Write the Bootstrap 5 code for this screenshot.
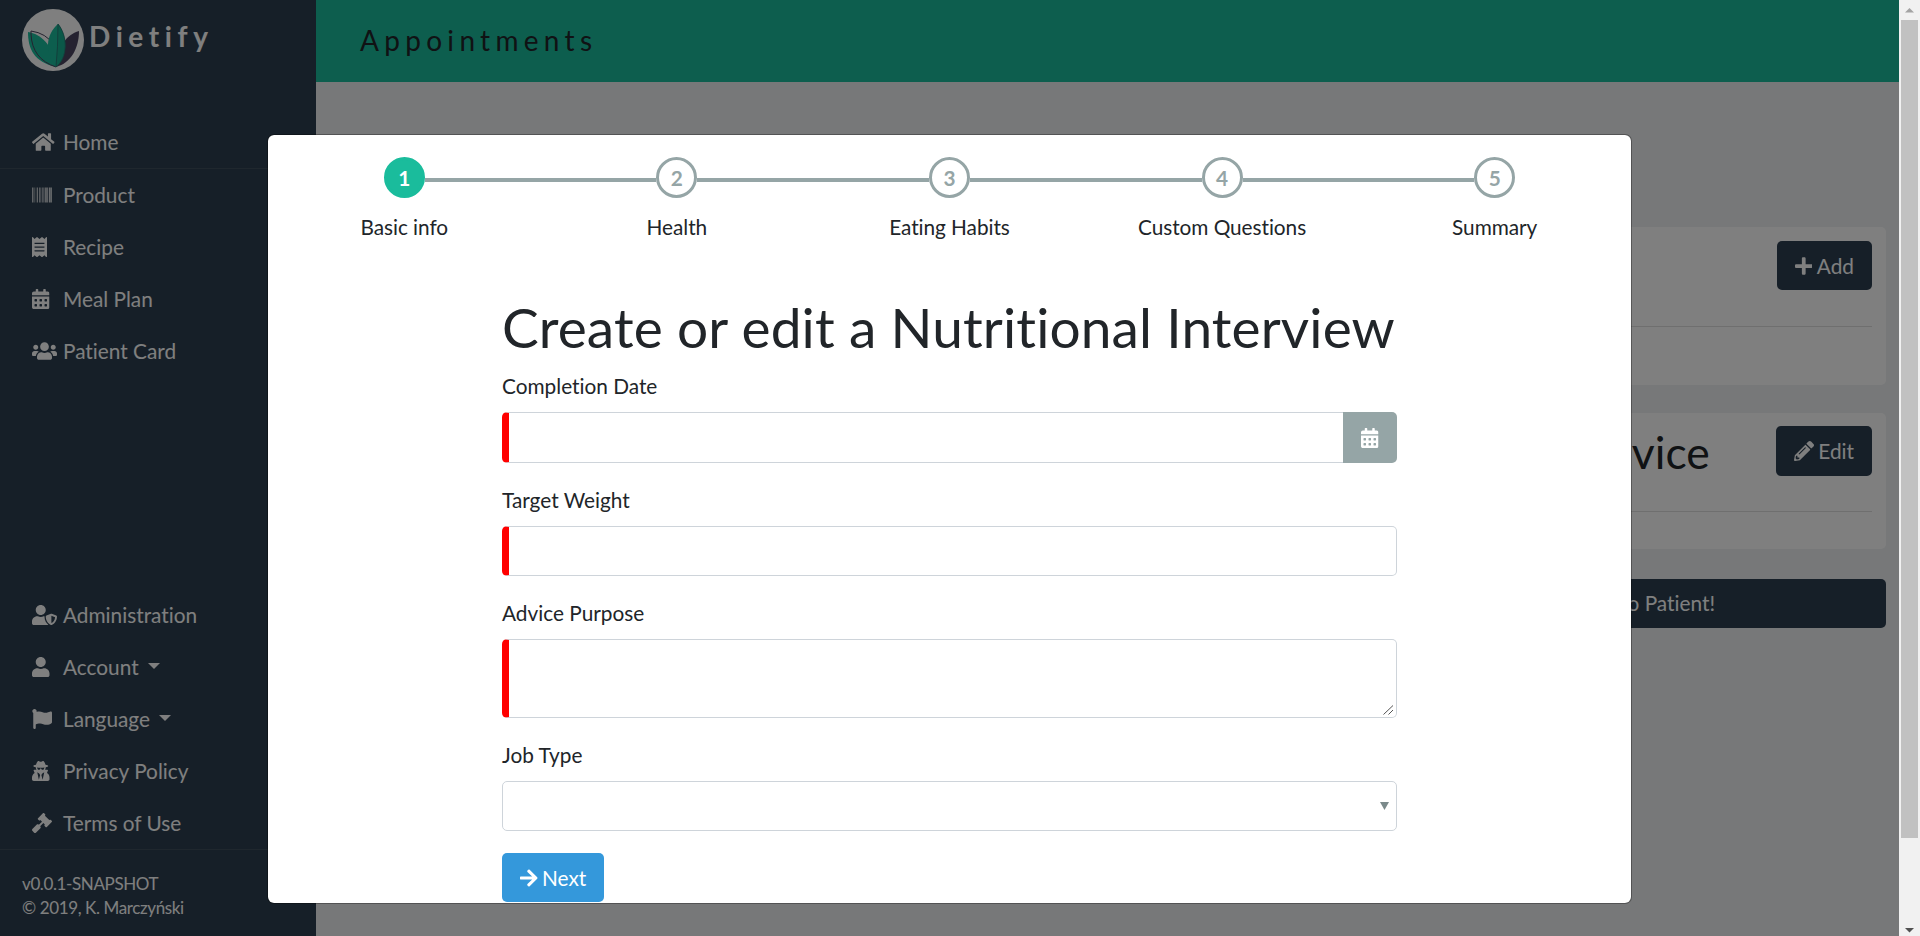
<!DOCTYPE html>
<html lang="en">
<head>
<meta charset="utf-8">
<title>Dietify</title>
<link href="https://cdn.jsdelivr.net/npm/bootstrap@5.3.0/dist/css/bootstrap.min.css" rel="stylesheet">
<style>
html,body{height:100%}
body{font-family:Lato,"Liberation Sans",sans-serif;font-size:20.8px;line-height:1.5;color:#212529;overflow:hidden;background:#eef0f2;font-variant-ligatures:none}
svg.ico{height:20px;width:auto;fill:currentColor;display:block;flex:none}
.page{margin-right:21px}
.sidebar{width:316px;background:#2c3e50;color:#fff;flex:none}
.brand{padding:9px 0 0 22px;height:116px}
.brand-name{font-size:28px;font-weight:700;letter-spacing:5.6px;line-height:54px;margin-left:5px}
.side-link{height:52px;padding:0 0 0 32px;color:#fff;text-decoration:none}
.side-link .slot{width:31px;flex:none}
.side-link .dropdown-toggle::after{margin-left:9px;border-top-width:6px;border-left-width:6px;border-right-width:6px;vertical-align:6px}
.rule{border-color:#3e4e5d!important}
.foot{font-size:17px;line-height:24px;padding:22px 0 0 22px;height:86px;letter-spacing:-.38px}
.topbar{height:82px;background:#1abc9c;padding:0 0 2px 44px;font-size:28px;letter-spacing:5.3px}
.work{padding:145px 13px 0 13px}
.panel{background:#fff;border-radius:5px;padding:14px 14px 0 0;margin-bottom:28px}
.panel-add{height:158px}
.panel-edit{height:136px}
.panel-head{height:85px}
.panel-edit .panel-head{height:84px}
.panel-edit .btn{height:50px;margin-top:-1px}
.panel hr{margin:0;opacity:.15}
.btn{font-size:20.8px;line-height:30px;padding:9px 17px;border:1px solid transparent;border-radius:5px;height:49px}
.btn-navy,.btn-navy:hover{background:#2c3e50;color:#fff}
.btn-next,.btn-next:hover{background:#3498db;color:#fff}
.panel-title{font-size:44.5px;line-height:50px;margin-right:66px}
.btn-send{padding:8px 170px 10px 17px;margin-top:30px}
.gap-ico{gap:4.5px}
.shade{position:absolute;inset:0 21px 0 0;background:rgba(0,0,0,.5)}
.wizard{position:absolute;left:267px;top:134px;width:1365px;height:770px;background:#fff;border:1px solid rgba(0,0,0,.3);border-radius:7px;background-clip:padding-box;overflow:hidden}
.steps{padding-top:22px}
.step-item{width:20%}
.step-item span{margin-top:13px;line-height:31px;letter-spacing:-.05px}
.bar{height:4px;background:#95a5a6;flex:1;margin-top:4px}
.bar.off{background:none}
.dot{width:41px;height:41px;border:3px solid #95a5a6;border-radius:50%;color:#95a5a6;font-weight:700;flex:none}
.dot.on{background:#1abc9c;border-color:#1abc9c;color:#fff}
.fields{width:895px;margin:53px auto 0}
.fields h2{font-size:55px;line-height:64px;margin:0 0 12px;font-weight:400;white-space:nowrap;letter-spacing:.12px}
.form-label{margin:0 0 12px;line-height:29px;display:block}
.form-control{height:50px;border:1px solid #ced4da;border-radius:5px;font-size:20.8px}
.field{margin-bottom:22px}
.date-field{height:51px}
textarea.form-control{height:79px;min-height:0;resize:none;display:block}
.grip{position:absolute;right:3px;bottom:3px}
.select-box{padding-right:7px}
.req{border-left:7px solid #f00}
.cal{width:54px;background:#95a5a6;color:#fff;border-radius:0 5px 5px 0}
.scroller{width:21px;background:#f1f1f1;position:absolute;right:0;top:0;bottom:0}
.thumb{width:17px;background:#c1c1c1;height:818px}
</style>
</head>
<body>
<svg width="0" height="0" class="position-absolute"><defs>
<symbol id="cal" viewBox="0 0 448 512"><path fill-rule="evenodd" d="M0 464c0 26.5 21.5 48 48 48h352c26.5 0 48-21.5 48-48V192H0zM64 268q0-12 12-12h40q12 0 12 12v40q0 12-12 12H76q-12 0-12-12zm128 0q0-12 12-12h40q12 0 12 12v40q0 12-12 12h-40q-12 0-12-12zm128 0q0-12 12-12h40q12 0 12 12v40q0 12-12 12h-40q-12 0-12-12zM64 396q0-12 12-12h40q12 0 12 12v40q0 12-12 12H76q-12 0-12-12zm128 0q0-12 12-12h40q12 0 12 12v40q0 12-12 12h-40q-12 0-12-12zm128 0q0-12 12-12h40q12 0 12 12v40q0 12-12 12h-40q-12 0-12-12zM400 64h-48V16c0-8.800-7.200-16-16-16h-32c-8.800 0-16 7.200-16 16v48H160V16c0-8.800-7.200-16-16-16h-32c-8.800 0-16 7.200-16 16v48H48C21.500 64 0 85.500 0 112v48h448v-48c0-26.500-21.500-48-48-48z"/></symbol>
</defs></svg>
<div class="position-relative h-100 overflow-hidden">
<div class="page d-flex h-100">
<nav class="sidebar d-flex flex-column">
  <div class="brand d-flex align-items-start">
    <svg width="62" height="62" viewBox="0 0 62 62"><circle cx="31" cy="31" r="31" fill="#fff"/><path d="M34 58C37 36 44 26 57 22C57 39 49 54 34 58z" fill="#4b4561"/><path d="M34 58C12 53 6 40 6 23C19 25 31 36 34 58z" fill="#1abc9c"/><path d="M9 25v-3q15 2 23 14M9 25q1 25 25 33" fill="none" stroke="#4b4561" stroke-width="1"/><path d="M34 58C22 44 24 25 36 15C46 27 46 49 34 58z" fill="#1abc9c"/><path d="M36 15C46 27 46 49 34 58Q36 38 36 15z" fill="#16b091" stroke="#2a6f6f" stroke-width=".8"/></svg>
    <span class="brand-name">Dietify</span>
  </div>
  <a class="side-link d-flex align-items-center" href="#"><span class="slot"><svg class="ico" viewBox="0 0 576 512"><path d="M280.37 148.26L96 300.11V464a16 16 0 0 0 16 16l112.060-.29a16 16 0 0 0 15.920-16V368a16 16 0 0 1 16-16h64a16 16 0 0 1 16 16v95.640a16 16 0 0 0 16 16.050L464 480a16 16 0 0 0 16-16V300L295.670 148.260a12.190 12.190 0 0 0-15.300 0zM571.600 251.470L488 182.560V44.050a12 12 0 0 0-12-12h-56a12 12 0 0 0-12 12v72.610L318.470 43a48 48 0 0 0-61 0L4.340 251.470a12 12 0 0 0-1.600 16.900l25.500 31A12 12 0 0 0 45.150 301l235.220-193.740a12.190 12.190 0 0 1 15.300 0L530.900 301a12 12 0 0 0 16.900-1.600l25.500-31a12 12 0 0 0-1.700-16.930z"/></svg></span>Home</a>
  <div class="border-top rule"></div>
  <a class="side-link d-flex align-items-center" href="#"><span class="slot"><svg class="ico" viewBox="0 0 512 512"><path d="M0 64h18v384H0zM26.900 64H36v384h-9.100zM54 64h9v384h-9zM98.900 64h8.900v384h-8.900zM134.900 64h17.700v384h-17.700zM179.700 64h8.900v384h-8.900zM197.700 64h8.900v384h-8.900zM215.700 64h8.900v384h-8.900zM251.400 64h18v384h-18zM296.300 64h18v384h-18zM332.300 64h18v384h-18zM368.300 64h18v384h-18zM395.100 64h18v384h-18zM440.300 64h26.900v384h-26.900zM476 64h9v384h-9zM494 64h18v384h-18z"/></svg></span>Product</a>
  <a class="side-link d-flex align-items-center" href="#"><span class="slot"><svg class="ico" viewBox="0 0 384 512"><path d="M358.400 3.200L320 48 265.600 3.200a15.900 15.900 0 0 0-19.200 0L192 48 137.600 3.200a15.900 15.900 0 0 0-19.200 0L64 48 25.600 3.200C15-4.700 0 2.800 0 16v480c0 13.200 15 20.700 25.600 12.800L64 464l54.400 44.800a15.900 15.900 0 0 0 19.200 0L192 464l54.400 44.800a15.900 15.900 0 0 0 19.200 0L320 464l38.400 44.800c10.500 7.900 25.600.4 25.600-12.800V16c0-13.200-15-20.700-25.600-12.800zM320 360c0 4.400-3.600 8-8 8H72c-4.400 0-8-3.600-8-8v-16c0-4.400 3.600-8 8-8h240c4.400 0 8 3.600 8 8v16zm0-96c0 4.400-3.600 8-8 8H72c-4.400 0-8-3.600-8-8v-16c0-4.400 3.600-8 8-8h240c4.400 0 8 3.600 8 8v16zm0-96c0 4.400-3.600 8-8 8H72c-4.400 0-8-3.600-8-8v-16c0-4.400 3.600-8 8-8h240c4.400 0 8 3.600 8 8v16z"/></svg></span>Recipe</a>
  <a class="side-link d-flex align-items-center" href="#"><span class="slot"><svg class="ico" viewBox="0 0 448 512"><use href="#cal"/></svg></span>Meal Plan</a>
  <a class="side-link d-flex align-items-center" href="#"><span class="slot"><svg class="ico" viewBox="0 0 640 512"><path d="M96 224c35.300 0 64-28.700 64-64s-28.700-64-64-64-64 28.700-64 64 28.700 64 64 64zm448 0c35.300 0 64-28.700 64-64s-28.700-64-64-64-64 28.700-64 64 28.700 64 64 64zm32 32h-64c-17.600 0-33.500 7.100-45.100 18.600 40.300 22.100 68.900 62 75.100 109.400h66c17.700 0 32-14.300 32-32v-32c0-35.300-28.700-64-64-64zm-256 0c61.900 0 112-50.100 112-112S381.900 32 320 32 208 82.100 208 144s50.100 112 112 112zm76.800 32h-8.300c-20.800 10-43.900 16-68.500 16s-47.600-6-68.500-16h-8.300C179.600 288 128 339.600 128 403.200V432c0 26.500 21.500 48 48 48h288c26.500 0 48-21.500 48-48v-28.800c0-63.600-51.600-115.200-115.200-115.200zm-223.700-13.400C161.500 263.100 145.600 256 128 256H64c-35.300 0-64 28.700-64 64v32c0 17.700 14.300 32 32 32h65.900c6.300-47.400 34.900-87.300 75.200-109.400z"/></svg></span>Patient Card</a>
  <a class="side-link d-flex align-items-center mt-auto" href="#"><span class="slot"><svg class="ico" viewBox="0 0 640 512"><path d="M622.300 271.100l-115.200-45c-4.100-1.600-12.600-3.700-22.200 0l-115.200 45c-10.700 4.200-17.700 14-17.700 24.900 0 111.600 68.700 188.800 132.900 213.900 9.600 3.700 18 1.600 22.200 0C558.400 489.900 640 420.500 640 296c0-10.900-7-20.700-17.700-24.900zM496 462.400V273.300l95.500 37.300c-5.600 87.100-60.900 135.400-95.500 151.800zM224 256c70.700 0 128-57.300 128-128S294.700 0 224 0 96 57.300 96 128s57.300 128 128 128zm96 40c0-2.500.8-4.800 1.100-7.200-2.500-.1-4.900-.8-7.500-.8h-16.700c-22.200 10.200-46.900 16-72.900 16s-50.600-5.800-72.900-16h-16.700C60.200 288 0 348.200 0 422.400V464c0 26.500 21.500 48 48 48h352c6.800 0 13.300-1.500 19.200-4-54-42.900-99.200-116.700-99.200-212z"/></svg></span>Administration</a>
  <a class="side-link d-flex align-items-center" href="#"><span class="slot"><svg class="ico" viewBox="0 0 448 512"><path d="M224 256c70.700 0 128-57.300 128-128S294.700 0 224 0 96 57.300 96 128s57.300 128 128 128zm89.600 32h-16.700c-22.200 10.200-46.900 16-72.900 16s-50.600-5.800-72.900-16h-16.700C60.200 288 0 348.200 0 422.400V464c0 26.500 21.500 48 48 48h352c26.500 0 48-21.500 48-48v-41.600c0-74.200-60.200-134.400-134.400-134.400z"/></svg></span><span class="dropdown-toggle">Account</span></a>
  <a class="side-link d-flex align-items-center" href="#"><span class="slot"><svg class="ico" viewBox="0 0 512 512"><path d="M349.565 98.783C295.978 98.783 251.721 64 184.348 64c-24.955 0-47.309 4.384-68.045 12.013a55.947 55.947 0 0 0 3.586-23.562C118.117 24.015 94.806 1.206 66.338.048 34.345-1.254 8 24.296 8 56c0 19.026 9.497 35.825 24 45.945V488c0 13.255 10.745 24 24 24h16c13.255 0 24-10.745 24-24v-94.400c28.311-12.064 63.582-22.122 114.435-22.122 53.588 0 97.844 34.783 165.217 34.783 48.169 0 86.667-16.294 122.505-40.858C506.840 359.452 512 349.571 512 339.045v-243.100c0-23.393-24.269-38.870-45.485-29.016-34.338 15.948-76.454 31.854-116.950 31.854z"/></svg></span><span class="dropdown-toggle">Language</span></a>
  <a class="side-link d-flex align-items-center" href="#"><span class="slot"><svg class="ico" viewBox="0 0 448 512"><path d="M383.900 308.300l23.900-62.600c4-10.500-3.700-21.700-15-21.700h-58.500c11-18.900 17.800-40.600 17.800-64v-.3c39.200-7.800 64-19.100 64-31.700 0-13.300-27.300-25.100-70.100-33-9.200-32.800-27-65.800-40.600-82.800-9.500-11.900-25.900-15.600-39.500-8.800l-27.600 13.800c-9 4.500-19.600 4.500-28.600 0L182.100 3.400c-13.600-6.800-30-3.100-39.500 8.800-13.500 17-31.400 50-40.600 82.800-42.700 7.900-70 19.700-70 33 0 12.600 24.800 23.900 64 31.700v.3c0 23.400 6.800 45.100 17.800 64H56.300c-11.500 0-19.200 11.700-14.700 22.300l25.800 60.200C27.300 329.800 0 372.700 0 422.400v44.800C0 491.900 20.100 512 44.800 512h358.400c24.700 0 44.800-20.100 44.800-44.800v-44.800c0-48.400-25.800-90.400-64.100-114.100zM176 480l-41.600-192 49.600 32 24 40-32 120zm96 0l-32-120 24-40 49.600-32L272 480zm41.700-298.500c-3.900 11.900-7 24.600-16.500 33.400-10.100 9.300-48 22.400-64-25-2.800-8.400-15.400-8.400-18.300 0-17 50.200-56 32.400-64 25-9.500-8.800-12.700-21.500-16.500-33.400-.8-2.500-6.300-5.700-6.300-5.800v-10.800c28.300 3.600 61 5.800 96 5.800s67.700-2.100 96-5.800v10.800c-.1.1-5.600 3.200-6.400 5.800z"/></svg></span>Privacy Policy</a>
  <a class="side-link d-flex align-items-center" href="#"><span class="slot"><svg class="ico" viewBox="0 0 512 512"><path d="M504.971 199.362l-22.627-22.627c-9.373-9.373-24.569-9.373-33.941 0l-5.657 5.657L329.608 69.255l5.657-5.657c9.373-9.373 9.373-24.569 0-33.941L312.638 7.029c-9.373-9.373-24.569-9.373-33.941 0L154.246 131.480c-9.373 9.373-9.373 24.569 0 33.941l22.627 22.627c9.373 9.373 24.569 9.373 33.941 0l5.657-5.657 39.598 39.598-81.040 81.040-5.657-5.657c-12.497-12.497-32.758-12.497-45.255 0L9.373 412.118c-12.497 12.497-12.497 32.758 0 45.255l45.255 45.255c12.497 12.497 32.758 12.497 45.255 0l114.745-114.745c12.497-12.497 12.497-32.758 0-45.255l-5.657-5.657 81.040-81.040 39.598 39.598-5.657 5.657c-9.373 9.373-9.373 24.569 0 33.941l22.627 22.627c9.373 9.373 24.569 9.373 33.941 0l124.451-124.451c9.372-9.372 9.372-24.568 0-33.941z"/></svg></span>Terms of Use</a>
  <div class="border-top rule"></div>
  <div class="foot">v0.0.1-SNAPSHOT<br>© 2019, K. Marczyński</div>
</nav>
<main class="flex-grow-1">
  <header class="topbar d-flex align-items-center">Appointments</header>
  <div class="work">
    <section class="panel panel-add"><div class="panel-head d-flex justify-content-end"><a class="btn btn-navy d-flex align-items-center gap-ico"><svg class="ico" viewBox="0 0 448 512"><path d="M416 208H272V64c0-17.670-14.330-32-32-32h-32c-17.670 0-32 14.330-32 32v144H32c-17.670 0-32 14.330-32 32v32c0 17.670 14.330 32 32 32h144v144c0 17.670 14.330 32 32 32h32c17.670 0 32-14.330 32-32V304h144c17.670 0 32-14.330 32-32v-32c0-17.670-14.330-32-32-32z"/></svg>Add</a></div><hr></section>
    <section class="panel panel-edit"><div class="panel-head d-flex justify-content-end"><span class="panel-title">Advice</span><a class="btn btn-navy d-flex align-items-center gap-ico"><svg class="ico" viewBox="0 0 512 512"><path d="M497.900 142.100l-46.100 46.100c-4.700 4.700-12.300 4.700-17 0l-111-111c-4.700-4.700-4.700-12.300 0-17l46.100-46.100c18.700-18.700 49.100-18.700 67.900 0l60.100 60.100c18.800 18.700 18.800 49.100 0 67.900zM284.200 99.800L21.600 362.400.4 483.900c-2.900 16.400 11.400 30.600 27.800 27.800l121.500-21.300 262.600-262.600c4.700-4.700 4.700-12.300 0-17l-111-111c-4.800-4.700-12.400-4.700-17.100 0zM124.100 339.900c-5.500-5.500-5.500-14.300 0-19.800l154-154c5.500-5.500 14.300-5.500 19.800 0s5.500 14.300 0 19.800l-154 154c-5.500 5.500-14.300 5.500-19.800 0zM88 424h48v36.300l-64.500 11.300-31.100-31.100L51.700 376H88v48z"/></svg>Edit</a></div><hr></section>
    <a class="btn btn-navy btn-send d-block text-end">Send to Patient!</a>
  </div>
</main>
</div>
<div class="shade"></div>
<div class="wizard">
  <div class="steps d-flex">
    <div class="step-item d-flex flex-column align-items-center"><div class="d-flex w-100 align-items-center"><i class="bar off"></i><b class="dot on d-flex align-items-center justify-content-center">1</b><i class="bar"></i></div><span>Basic info</span></div>
    <div class="step-item d-flex flex-column align-items-center"><div class="d-flex w-100 align-items-center"><i class="bar"></i><b class="dot d-flex align-items-center justify-content-center">2</b><i class="bar"></i></div><span>Health</span></div>
    <div class="step-item d-flex flex-column align-items-center"><div class="d-flex w-100 align-items-center"><i class="bar"></i><b class="dot d-flex align-items-center justify-content-center">3</b><i class="bar"></i></div><span>Eating Habits</span></div>
    <div class="step-item d-flex flex-column align-items-center"><div class="d-flex w-100 align-items-center"><i class="bar"></i><b class="dot d-flex align-items-center justify-content-center">4</b><i class="bar"></i></div><span>Custom Questions</span></div>
    <div class="step-item d-flex flex-column align-items-center"><div class="d-flex w-100 align-items-center"><i class="bar"></i><b class="dot d-flex align-items-center justify-content-center">5</b><i class="bar off"></i></div><span>Summary</span></div>
  </div>
  <form class="fields">
    <h2>Create or edit a Nutritional Interview</h2>
    <label class="form-label">Completion Date</label>
    <div class="field date-field d-flex"><input class="form-control req h-100 rounded-end-0 border-end-0"><div class="cal d-flex align-items-center justify-content-center flex-shrink-0"><svg class="ico" viewBox="0 0 448 512"><use href="#cal"/></svg></div></div>
    <label class="form-label">Target Weight</label>
    <input class="form-control req field">
    <label class="form-label">Advice Purpose</label>
    <div class="field position-relative"><textarea class="form-control req"></textarea><svg class="grip" width="11" height="10" viewBox="0 0 11 10"><path d="M.5 9.500L10 .5M5.500 9.500L10 5" fill="none" stroke="#555" stroke-width="1"/></svg></div>
    <label class="form-label">Job Type</label>
    <div class="form-control field select-box d-flex align-items-center justify-content-end"><svg width="9" height="8" viewBox="0 0 9 8"><path d="M0 0h9L4.500 8z" fill="#7b8a8b"/></svg></div>
    <a class="btn btn-next d-inline-flex align-items-center gap-ico"><svg class="ico" viewBox="0 0 448 512"><path d="M190.500 66.900l22.200-22.200c9.400-9.400 24.600-9.400 33.900 0L441 239c9.400 9.400 9.400 24.600 0 33.900L246.600 467.300c-9.400 9.400-24.600 9.400-33.900 0l-22.200-22.200c-9.500-9.500-9.300-25 .4-34.300L311.400 296H24c-13.300 0-24-10.700-24-24v-32c0-13.300 10.700-24 24-24h287.400L190.900 101.200c-9.800-9.300-10-24.800-.4-34.300z"/></svg>Next</a>
  </form>
</div>
<div class="scroller d-flex flex-column align-items-center justify-content-between">
  <div class="d-flex flex-column align-items-center"><svg width="9" height="20" viewBox="0 0 9 20"><path d="M0 12.500h9L4.500 8z" fill="#a3a3a3"/></svg><div class="thumb"></div></div>
  <svg width="9" height="13" viewBox="0 0 9 13"><path d="M0 5h9L4.500 9.500z" fill="#505050"/></svg>
</div>
</div>
<script src="https://cdn.jsdelivr.net/npm/bootstrap@5.3.0/dist/js/bootstrap.bundle.min.js"></script>
</body>
</html>
